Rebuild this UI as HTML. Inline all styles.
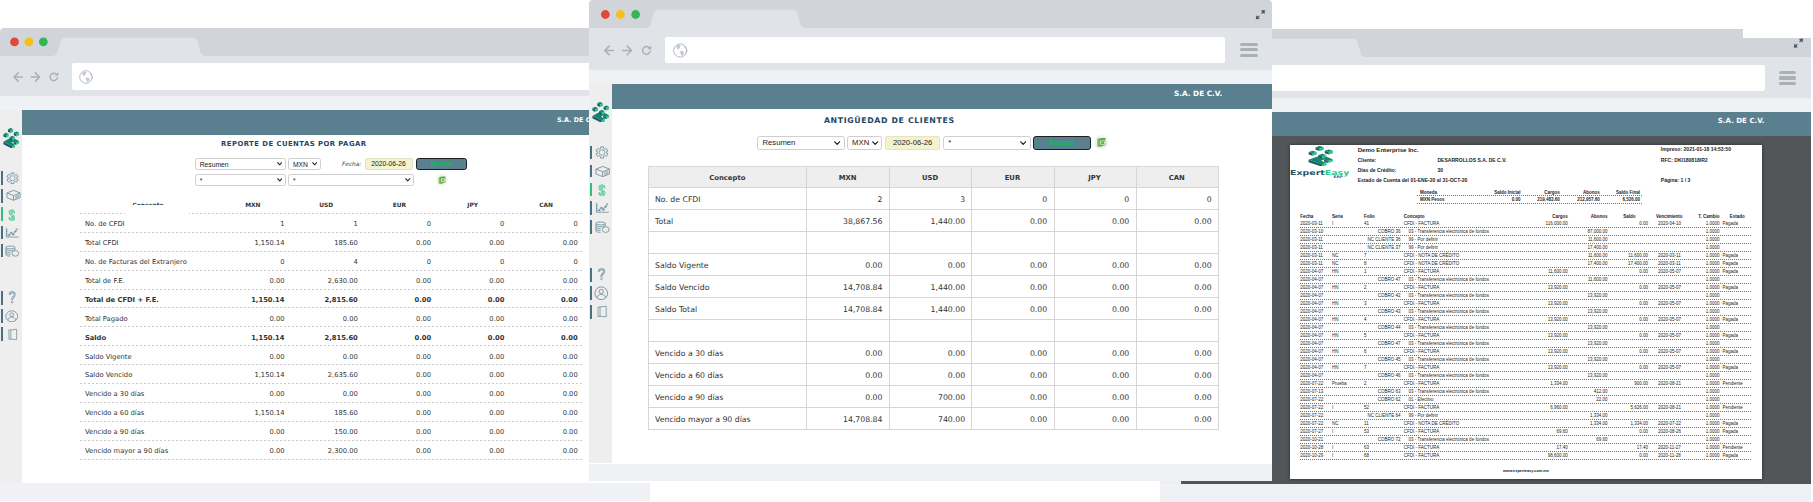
<!DOCTYPE html>
<html lang="es"><head><meta charset="utf-8"><title>ExpertEasy ERP</title>
<style>
html,body{margin:0;padding:0;background:#fff}
body{width:1813px;height:502px;position:relative;overflow:hidden;font-family:"DejaVu Sans","Liberation Sans",sans-serif;color:#333}
.abs{position:absolute;box-sizing:border-box}
.win{position:absolute;left:0;top:0;width:1813px;height:502px;overflow:hidden}
.sel{background:#fff;border:1px solid #cfcfcf;border-radius:2.500px;font-family:"Liberation Sans",sans-serif;color:#222;white-space:nowrap;overflow:hidden}
.t{position:absolute;white-space:nowrap}
.r{text-align:right}
.c{text-align:center}
.b{font-weight:bold}
.pdf{font-family:"Liberation Sans",sans-serif;color:#222}
.pdf .t{font-size:4.500px;line-height:6px}
.dot{position:absolute;height:1px;background:repeating-linear-gradient(90deg,#707070 0,#707070 1px,transparent 1px,transparent 2px)}
.dash{position:absolute;height:1px;background:repeating-linear-gradient(90deg,#cbcbcb 0,#cbcbcb 2px,transparent 2px,transparent 4px)}
</style></head><body>


<svg width="0" height="0" style="position:absolute"><defs>
<symbol id="i-gear" viewBox="0 0 16 16"><g fill="none" stroke="#6b8b99" stroke-width="1" stroke-linejoin="round"><path d="M6.16 1.14 L9.84 1.14 L9.42 2.69 L11.89 4.11 L13.02 2.98 L14.86 6.16 L13.31 6.58 L13.31 9.42 L14.86 9.84 L13.02 13.02 L11.89 11.89 L9.42 13.31 L9.84 14.86 L6.16 14.86 L6.58 13.31 L4.11 11.89 L2.98 13.02 L1.14 9.84 L2.69 9.42 L2.69 6.58 L1.14 6.16 L2.98 2.98 L4.11 4.11 L6.58 2.69Z" stroke-width="0.950"/><circle cx="8" cy="8" r="3.300" stroke-width="0.900"/></g></symbol>
<symbol id="i-box" viewBox="0 0 16 16"><g fill="none" stroke="#6b8b99" stroke-width="0.95" stroke-linejoin="round"><path d="M8 1.800 15 5.200v6.200l-7 3.400-7-3.400V5.200z"/><path d="M1 5.200l7 3.400 7-3.400M8 8.600v6.200"/><path d="M10.200 9.400l3.200-1.500v2.800l-3.200 1.500z" stroke-width="0.6"/><path d="M10.900 10.200l1.800-.8M10.900 11.200l1.800-.8" stroke-width="0.5"/></g></symbol>
<symbol id="i-chart" viewBox="0 0 16 16"><g fill="none" stroke="#6b8b99" stroke-width="0.95" stroke-linecap="round"><path d="M1.600 1.500v12.400h13.400"/><path d="M1.600 4h1.600M1.600 6.500h1.600M1.600 9h1.600M1.600 11.500h1.600" stroke-width="0.6"/><path d="M4.500 11.200l2.300-3.400 2.300 2.600 2.400-4.200 2.300-3"/><circle cx="4.500" cy="11.400" r="1" fill="#eee"/><circle cx="6.900" cy="8" r="1" fill="#eee"/><circle cx="9.200" cy="10.400" r="1" fill="#eee"/><circle cx="11.500" cy="6.400" r="1" fill="#eee"/><path d="M12.400 2.600l1.800-.2-.1 1.800" stroke-width="0.7"/></g></symbol>
<symbol id="i-coins" viewBox="0 0 16 16"><g fill="none" stroke="#6b8b99" stroke-width="0.95"><ellipse cx="6" cy="3.200" rx="5" ry="1.900"/><path d="M1 3.200v2.400c0 1 2.200 1.900 5 1.900s5-.9 5-1.900V3.200"/><path d="M1 5.600v2.400c0 1 2.200 1.900 5 1.900"/><path d="M1 8v2.400c0 1 2.200 1.900 5 1.900"/><path d="M1 10.400v2.400c0 1 2.200 1.900 5 1.900"/><circle cx="11.400" cy="11" r="3.700" fill="#eee"/></g></symbol>
<symbol id="i-user" viewBox="0 0 16 16"><g fill="none" stroke="#6b8b99" stroke-width="0.95"><circle cx="8" cy="8" r="7"/><circle cx="8" cy="6" r="2.300"/><path d="M3.200 13c.6-2.600 2.600-3.900 4.800-3.900s4.200 1.300 4.800 3.900"/></g></symbol>
<symbol id="i-book" viewBox="0 0 16 16"><g fill="none" stroke="#6b8b99" stroke-width="0.95" stroke-linejoin="round"><path d="M2.600 2.400h2.600v11.600H2.600z"/><path d="M5.200 2.400 13.200 1.600v12.800l-8 -.4"/></g></symbol>
<symbol id="i-logo" viewBox="0 0 26 22"><g><path d="M11.90 -0.10 L16.05 1.35 L11.90 2.80 L7.75 1.35z" fill="#14866f"/><path d="M7.75 1.35 L11.90 2.80 L11.90 5.50 L7.75 4.05z" fill="#1f5b68"/><path d="M16.05 1.35 L11.90 2.80 L11.90 5.50 L16.05 4.05z" fill="#27c583"/><path d="M4.80 5.10 L8.95 6.55 L4.80 8.00 L0.65 6.55z" fill="#14866f"/><path d="M0.65 6.55 L4.80 8.00 L4.80 10.70 L0.65 9.25z" fill="#1f5b68"/><path d="M8.95 6.55 L4.80 8.00 L4.80 10.70 L8.95 9.25z" fill="#27c583"/><path d="M21.20 3.70 L25.35 5.15 L21.20 6.60 L17.05 5.15z" fill="#14866f"/><path d="M17.05 5.15 L21.20 6.60 L21.20 9.30 L17.05 7.85z" fill="#1f5b68"/><path d="M25.35 5.15 L21.20 6.60 L21.20 9.30 L25.35 7.85z" fill="#27c583"/><path d="M9.600 11.400 0.600 15 14.400 20 19 18.200 13.200 16 16.400 14.600 20.800 16.300 25.400 14.500 17.200 11.300 13.600 12.700z" fill="#14866f"/><path d="M0.600 15v2.600l13.800 5v-2.600z" fill="#1f5b68"/><path d="M14.400 20v2.600l4.600-1.800v-2.600z" fill="#27c583"/><path d="M16.400 14.600v2.200l4.400 1.700v-2.200z" fill="#1f5b68"/><path d="M20.800 16.300v2.200l4.600-1.800v-2.200z" fill="#27c583"/><path d="M14.55 8.40 L18.70 9.85 L14.55 11.30 L10.40 9.85z" fill="#14866f"/><path d="M10.40 9.85 L14.55 11.30 L14.55 14.00 L10.40 12.55z" fill="#1f5b68"/><path d="M18.70 9.85 L14.55 11.30 L14.55 14.00 L18.70 12.55z" fill="#27c583"/></g></symbol>
<symbol id="i-xls" viewBox="0 0 14 14"><linearGradient id="xg" x1="0" x2="1" y1="0" y2="0"><stop offset="0" stop-color="#8ed06c"/><stop offset="0.350" stop-color="#5fae42"/><stop offset="1" stop-color="#58a83e"/></linearGradient><circle cx="7" cy="7" r="7" fill="#f3f3f3"/><path d="M3 3.700 C5 2.700 9 2.700 11 2.900 V9.800 C9.500 10 8 10.500 7 11.400 L3 11.400z" fill="url(#xg)"/><path d="M5.900 5.200h4.800v4.300H5.900z" fill="#e3f1da"/><path d="M6.700 5.900l3.200 2.900M9.900 5.900l-3.200 2.900" stroke="#4f9e38" stroke-width="1.100"/></symbol>
</defs></svg>

<div class="win" id="right">
<div class="abs" style="left:1160.4px;top:28.9px;width:650.3px;height:27.700000000000003px;background:#d1d5da;border-radius:4px 4px 0 0"></div>
<svg class="abs" style="left:1160.4px;top:28.9px"  width="650.3" height="28.700000000000003" viewBox="0 0 650.3 28.700000000000003"><path d="M53.6 28.700000000000003 L53.6 27.700000000000003 Q56.4 27.700000000000003 57.3 25.000000000000004 L60.8 12.5 Q61.7 9.8 64.5 9.8 L193.6 9.8 Q196.4 9.8 197.3 12.5 L200.8 25.000000000000004 Q201.7 27.700000000000003 204.5 27.700000000000003 L204.5 28.700000000000003 Z" fill="#e0e4e9"/><circle cx="14.5" cy="13.9" r="4.4" fill="#e0483e"/><circle cx="28.85" cy="13.9" r="4.4" fill="#f6c115"/><circle cx="43.35" cy="13.9" r="4.4" fill="#34b556"/><g fill="#4b5563" stroke="#4b5563" stroke-width="1.1"><path d="M641.8 10.899999999999999 L639.6999999999999 13.0 M637.4999999999999 15.2 L635.3999999999999 17.3" fill="none"/><path d="M643.1999999999999 9.5 l-4.1 0.5 l3.6 3.6 z" stroke="none"/><path d="M633.9999999999999 18.7 l4.1 -0.5 l-3.6 -3.6 z" stroke="none"/></g></svg>
<div class="abs" style="left:1160.4px;top:56.6px;width:650.3px;height:41.4px;background:#e0e4e9"></div>
<div class="abs" style="left:1160.4px;top:98px;width:650.3px;height:13.799999999999997px;background:#eff1f5"></div>
<div class="abs" style="left:1232.1000000000001px;top:64.9px;width:533.3px;height:26.099999999999994px;background:#fff;border-radius:2px"></div>
<svg class="abs" style="left:1160.4px;top:68.45px" width="110.0" height="20.0" viewBox="0 0 110 20" fill="none" stroke="#a9b0ba" stroke-width="1.550" stroke-linecap="round" stroke-linejoin="round"><path d="M22.4 10 H14.4 M18.2 5.900 L14.1 10 L18.2 14.100"/><path d="M31.200 10 H39.2 M35.400 5.900 L39.5 10 L35.400 14.100"/><path d="M56.300 7.200 A3.700 3.700 0 1 0 57.400 10.600" stroke-width="1.350"/><path d="M58.300 5.300 V8.800 H54.800 Z" fill="#a9b0ba" stroke="none"/><g stroke-width="0.850"><circle cx="86" cy="10" r="6.300"/><g fill="#c3c9d2" stroke="none"><path d="M82.300 5.900 C83.400 4.800 85.600 4.500 86.600 5.400 C86.400 6.600 85.200 6.800 85.200 7.900 C84.900 9 83.700 9.300 83.200 8.400 C82.700 7.600 81.900 6.900 82.300 5.900Z"/><path d="M86 10.700 C87.300 10.200 89.200 10.900 89.600 12 C89.600 13.300 88.500 14.100 88.100 15.600 C87.200 15.200 86.500 13.700 86.300 12.600 C86.100 12 85.600 11.300 86 10.700Z"/><path d="M89.800 5.800 C90.800 5.900 91.800 7.200 92 8.700 C91.300 8.900 90.400 8.300 89.900 7.500Z"/><path d="M90.800 10.200 C91.500 10.400 92.100 11 92 12.200 C91.300 12.800 90.500 11.600 90.800 10.200Z"/></g></g></svg>
<div class="abs" style="left:1779.1000000000001px;top:70.85000000000001px;width:17.4px;height:3.2px;border-radius:1.6px;background:#a9b0ba"></div>
<div class="abs" style="left:1779.1000000000001px;top:76.35000000000001px;width:17.4px;height:3.2px;border-radius:1.6px;background:#a9b0ba"></div>
<div class="abs" style="left:1779.1000000000001px;top:81.85000000000001px;width:17.4px;height:3.2px;border-radius:1.6px;background:#a9b0ba"></div>
<div class="abs" style="left:1160.4px;top:111.8px;width:20.6px;height:372.4px;background:#eeeeee"></div>
<div class="abs" style="left:1181.0px;top:111.8px;width:629.6999999999999px;height:24.600px;background:#5a7f8f"></div>
<div class="abs" style="left:1181.0px;top:136px;width:629.6999999999999px;height:348.2px;background:#525659"></div>
<div class="abs" style="left:1160.4px;top:484.2px;width:650.3px;height:20px;background:#eff1f5"></div>
<div class="t b" style="left:1717.800px;top:115.400px;font-size:7.050px;line-height:11px;color:#fff">S.A. DE C.V.</div>
<div class="abs" style="left:1742.9px;top:0;width:80px;height:37.9px;background:#fff"></div>
<div class="abs pdf" style="left:1290px;top:144.6px;width:472px;height:334.2px;background:#fff;box-shadow:0 0 3px rgba(0,0,0,.55)">
<svg class="abs" style="left:17.90000000000009px;top:1.4000000000000057px" width="25.500" height="20.200" viewBox="0 0 26 22" preserveAspectRatio="none"><use href="#i-logo"/></svg>
<svg class="abs" style="left:0.2999999999999545px;top:22.900000000000006px;overflow:visible" width="60" height="12" viewBox="0 0 60 12"><text x="0" y="8.200" font-family="DejaVu Sans, sans-serif" font-weight="bold" font-size="6.800" textLength="59.400" lengthAdjust="spacingAndGlyphs"><tspan fill="#28556a">Expert</tspan><tspan fill="#2fc88a">Easy</tspan></text><text x="43.500" y="11" font-family="DejaVu Sans, sans-serif" font-weight="bold" font-size="3.500" fill="#2d6374" textLength="9.500" lengthAdjust="spacingAndGlyphs">ERP</text></svg>
<div class="t b" style="top:2.40px;left:67.70px;font-size:6.100px;">Demo Enterprise Inc.</div>
<div class="t b" style="top:12.70px;left:67.70px;font-size:5.050px;">Cliente:</div>
<div class="t b" style="top:12.70px;left:147.40px;font-size:5.050px;">DESARROLLOS S.A. DE C.V.</div>
<div class="t b" style="top:22.70px;left:67.70px;font-size:5.050px;">Días de Crédito:</div>
<div class="t b" style="top:22.70px;left:147.40px;font-size:5.050px;">30</div>
<div class="t b" style="top:32.60px;left:67.70px;font-size:5.050px;">Estado de Cuenta del 01-ENE-20 al 31-OCT-20</div>
<div class="t b" style="top:1.70px;left:370.80px;font-size:5.050px;">Impreso: 2021-01-18 14:53:50</div>
<div class="t b" style="top:12.70px;left:370.80px;font-size:5.050px;">RFC: DKI180818IR2</div>
<div class="t b" style="top:32.60px;left:370.80px;font-size:5.050px;">Página: 1 / 3</div>
<div class="t b" style="top:45.20px;left:130.00px;">Moneda</div>
<div class="t b" style="top:45.20px;right:241.60px;">Saldo Inicial</div>
<div class="t b" style="top:45.20px;right:202.20px;">Cargos</div>
<div class="t b" style="top:45.20px;right:162.30px;">Abonos</div>
<div class="t b" style="top:45.20px;right:122.00px;">Saldo Final</div>
<div class="dot" style="left:126.5px;top:50.5px;width:226.500px"></div>
<div class="t b" style="top:52.70px;left:130.00px;">MXN Pesos</div>
<div class="t b" style="top:52.70px;right:241.60px;">0.00</div>
<div class="t b" style="top:52.70px;right:202.20px;">219,483.60</div>
<div class="t b" style="top:52.70px;right:162.30px;">212,957.60</div>
<div class="t b" style="top:52.70px;right:122.00px;">6,526.00</div>
<div class="dot" style="left:126.5px;top:58.400000000000006px;width:226.500px"></div>
<div class="t b" style="top:69.00px;left:10.20px;">Fecha</div>
<div class="t b" style="top:69.00px;left:42.10px;">Serie</div>
<div class="t b" style="top:69.00px;left:74.00px;">Folio</div>
<div class="t b" style="top:69.00px;left:113.80px;">Concepto</div>
<div class="t b" style="top:69.00px;right:194.20px;">Cargos</div>
<div class="t b" style="top:69.00px;right:154.40px;">Abonos</div>
<div class="t b" style="top:69.00px;right:126.50px;">Saldo</div>
<div class="t b" style="top:69.00px;left:366.00px;">Vencimiento</div>
<div class="t b" style="top:69.00px;right:42.60px;">T. Cambio</div>
<div class="t b" style="top:69.00px;left:439.80px;">Estado</div>
<div class="t " style="top:76.40px;left:10.20px;">2020-03-11</div>
<div class="t " style="top:76.40px;left:42.10px;">I</div>
<div class="t " style="top:76.40px;left:74.00px;">41</div>
<div class="t " style="top:76.40px;left:113.80px;">CFDI - FACTURA</div>
<div class="t " style="top:76.40px;right:194.20px;">116,000.00</div>
<div class="t " style="top:76.40px;right:114.10px;">0.00</div>
<div class="t " style="top:76.40px;left:368.00px;">2020-04-10</div>
<div class="t " style="top:76.40px;right:42.40px;">1.0000</div>
<div class="t " style="top:76.40px;left:432.60px;">Pagada</div>
<div class="dot" style="left:10px;top:82.80px;width:451.700px"></div>
<div class="t " style="top:84.40px;left:10.20px;">2020-03-10</div>
<div class="t " style="top:84.40px;right:361.40px;">COBRO 36</div>
<div class="t " style="top:84.40px;left:118.60px;">03 - Transferencia electrónica de fondos</div>
<div class="t " style="top:84.40px;right:154.40px;">87,000.00</div>
<div class="t " style="top:84.40px;right:42.40px;">1.0000</div>
<div class="dot" style="left:10px;top:90.80px;width:451.700px"></div>
<div class="t " style="top:92.40px;left:10.20px;">2020-03-11</div>
<div class="t " style="top:92.40px;right:361.40px;">NC CLIENTE 36</div>
<div class="t " style="top:92.40px;left:118.60px;">99 - Por definir</div>
<div class="t " style="top:92.40px;right:154.40px;">11,600.00</div>
<div class="t " style="top:92.40px;right:42.40px;">1.0000</div>
<div class="dot" style="left:10px;top:98.80px;width:451.700px"></div>
<div class="t " style="top:100.40px;left:10.20px;">2020-03-11</div>
<div class="t " style="top:100.40px;right:361.40px;">NC CLIENTE 37</div>
<div class="t " style="top:100.40px;left:118.60px;">99 - Por definir</div>
<div class="t " style="top:100.40px;right:154.40px;">17,400.00</div>
<div class="t " style="top:100.40px;right:42.40px;">1.0000</div>
<div class="dot" style="left:10px;top:106.80px;width:451.700px"></div>
<div class="t " style="top:108.40px;left:10.20px;">2020-03-11</div>
<div class="t " style="top:108.40px;left:42.10px;">NC</div>
<div class="t " style="top:108.40px;left:74.00px;">7</div>
<div class="t " style="top:108.40px;left:113.80px;">CFDI - NOTA DE CRÉDITO</div>
<div class="t " style="top:108.40px;right:154.40px;">11,600.00</div>
<div class="t " style="top:108.40px;right:114.10px;">11,600.00</div>
<div class="t " style="top:108.40px;left:368.00px;">2020-03-11</div>
<div class="t " style="top:108.40px;right:42.40px;">1.0000</div>
<div class="t " style="top:108.40px;left:432.60px;">Pagada</div>
<div class="dot" style="left:10px;top:114.80px;width:451.700px"></div>
<div class="t " style="top:116.40px;left:10.20px;">2020-03-11</div>
<div class="t " style="top:116.40px;left:42.10px;">NC</div>
<div class="t " style="top:116.40px;left:74.00px;">8</div>
<div class="t " style="top:116.40px;left:113.80px;">CFDI - NOTA DE CRÉDITO</div>
<div class="t " style="top:116.40px;right:154.40px;">17,400.00</div>
<div class="t " style="top:116.40px;right:114.10px;">17,400.00</div>
<div class="t " style="top:116.40px;left:368.00px;">2020-03-11</div>
<div class="t " style="top:116.40px;right:42.40px;">1.0000</div>
<div class="t " style="top:116.40px;left:432.60px;">Pagada</div>
<div class="dot" style="left:10px;top:122.80px;width:451.700px"></div>
<div class="t " style="top:124.40px;left:10.20px;">2020-04-07</div>
<div class="t " style="top:124.40px;left:42.10px;">HN</div>
<div class="t " style="top:124.40px;left:74.00px;">1</div>
<div class="t " style="top:124.40px;left:113.80px;">CFDI - FACTURA</div>
<div class="t " style="top:124.40px;right:194.20px;">11,600.00</div>
<div class="t " style="top:124.40px;right:114.10px;">0.00</div>
<div class="t " style="top:124.40px;left:368.00px;">2020-05-07</div>
<div class="t " style="top:124.40px;right:42.40px;">1.0000</div>
<div class="t " style="top:124.40px;left:432.60px;">Pagada</div>
<div class="dot" style="left:10px;top:130.80px;width:451.700px"></div>
<div class="t " style="top:132.40px;left:10.20px;">2020-04-07</div>
<div class="t " style="top:132.40px;right:361.40px;">COBRO 47</div>
<div class="t " style="top:132.40px;left:118.60px;">03 - Transferencia electrónica de fondos</div>
<div class="t " style="top:132.40px;right:154.40px;">11,600.00</div>
<div class="t " style="top:132.40px;right:42.40px;">1.0000</div>
<div class="dot" style="left:10px;top:138.80px;width:451.700px"></div>
<div class="t " style="top:140.40px;left:10.20px;">2020-04-07</div>
<div class="t " style="top:140.40px;left:42.10px;">HN</div>
<div class="t " style="top:140.40px;left:74.00px;">2</div>
<div class="t " style="top:140.40px;left:113.80px;">CFDI - FACTURA</div>
<div class="t " style="top:140.40px;right:194.20px;">13,920.00</div>
<div class="t " style="top:140.40px;right:114.10px;">0.00</div>
<div class="t " style="top:140.40px;left:368.00px;">2020-05-07</div>
<div class="t " style="top:140.40px;right:42.40px;">1.0000</div>
<div class="t " style="top:140.40px;left:432.60px;">Pagada</div>
<div class="dot" style="left:10px;top:146.80px;width:451.700px"></div>
<div class="t " style="top:148.40px;left:10.20px;">2020-04-07</div>
<div class="t " style="top:148.40px;right:361.40px;">COBRO 42</div>
<div class="t " style="top:148.40px;left:118.60px;">03 - Transferencia electrónica de fondos</div>
<div class="t " style="top:148.40px;right:154.40px;">13,920.00</div>
<div class="t " style="top:148.40px;right:42.40px;">1.0000</div>
<div class="dot" style="left:10px;top:154.80px;width:451.700px"></div>
<div class="t " style="top:156.40px;left:10.20px;">2020-04-07</div>
<div class="t " style="top:156.40px;left:42.10px;">HN</div>
<div class="t " style="top:156.40px;left:74.00px;">3</div>
<div class="t " style="top:156.40px;left:113.80px;">CFDI - FACTURA</div>
<div class="t " style="top:156.40px;right:194.20px;">13,920.00</div>
<div class="t " style="top:156.40px;right:114.10px;">0.00</div>
<div class="t " style="top:156.40px;left:368.00px;">2020-05-07</div>
<div class="t " style="top:156.40px;right:42.40px;">1.0000</div>
<div class="t " style="top:156.40px;left:432.60px;">Pagada</div>
<div class="dot" style="left:10px;top:162.80px;width:451.700px"></div>
<div class="t " style="top:164.40px;left:10.20px;">2020-04-07</div>
<div class="t " style="top:164.40px;right:361.40px;">COBRO 43</div>
<div class="t " style="top:164.40px;left:118.60px;">03 - Transferencia electrónica de fondos</div>
<div class="t " style="top:164.40px;right:154.40px;">13,920.00</div>
<div class="t " style="top:164.40px;right:42.40px;">1.0000</div>
<div class="dot" style="left:10px;top:170.80px;width:451.700px"></div>
<div class="t " style="top:172.40px;left:10.20px;">2020-04-07</div>
<div class="t " style="top:172.40px;left:42.10px;">HN</div>
<div class="t " style="top:172.40px;left:74.00px;">4</div>
<div class="t " style="top:172.40px;left:113.80px;">CFDI - FACTURA</div>
<div class="t " style="top:172.40px;right:194.20px;">13,920.00</div>
<div class="t " style="top:172.40px;right:114.10px;">0.00</div>
<div class="t " style="top:172.40px;left:368.00px;">2020-05-07</div>
<div class="t " style="top:172.40px;right:42.40px;">1.0000</div>
<div class="t " style="top:172.40px;left:432.60px;">Pagada</div>
<div class="dot" style="left:10px;top:178.80px;width:451.700px"></div>
<div class="t " style="top:180.40px;left:10.20px;">2020-04-07</div>
<div class="t " style="top:180.40px;right:361.40px;">COBRO 44</div>
<div class="t " style="top:180.40px;left:118.60px;">03 - Transferencia electrónica de fondos</div>
<div class="t " style="top:180.40px;right:154.40px;">13,920.00</div>
<div class="t " style="top:180.40px;right:42.40px;">1.0000</div>
<div class="dot" style="left:10px;top:186.80px;width:451.700px"></div>
<div class="t " style="top:188.40px;left:10.20px;">2020-04-07</div>
<div class="t " style="top:188.40px;left:42.10px;">HN</div>
<div class="t " style="top:188.40px;left:74.00px;">5</div>
<div class="t " style="top:188.40px;left:113.80px;">CFDI - FACTURA</div>
<div class="t " style="top:188.40px;right:194.20px;">13,920.00</div>
<div class="t " style="top:188.40px;right:114.10px;">0.00</div>
<div class="t " style="top:188.40px;left:368.00px;">2020-05-07</div>
<div class="t " style="top:188.40px;right:42.40px;">1.0000</div>
<div class="t " style="top:188.40px;left:432.60px;">Pagada</div>
<div class="dot" style="left:10px;top:194.80px;width:451.700px"></div>
<div class="t " style="top:196.40px;left:10.20px;">2020-04-07</div>
<div class="t " style="top:196.40px;right:361.40px;">COBRO 47</div>
<div class="t " style="top:196.40px;left:118.60px;">03 - Transferencia electrónica de fondos</div>
<div class="t " style="top:196.40px;right:154.40px;">13,920.00</div>
<div class="t " style="top:196.40px;right:42.40px;">1.0000</div>
<div class="dot" style="left:10px;top:202.80px;width:451.700px"></div>
<div class="t " style="top:204.40px;left:10.20px;">2020-04-07</div>
<div class="t " style="top:204.40px;left:42.10px;">HN</div>
<div class="t " style="top:204.40px;left:74.00px;">6</div>
<div class="t " style="top:204.40px;left:113.80px;">CFDI - FACTURA</div>
<div class="t " style="top:204.40px;right:194.20px;">13,920.00</div>
<div class="t " style="top:204.40px;right:114.10px;">0.00</div>
<div class="t " style="top:204.40px;left:368.00px;">2020-05-07</div>
<div class="t " style="top:204.40px;right:42.40px;">1.0000</div>
<div class="t " style="top:204.40px;left:432.60px;">Pagada</div>
<div class="dot" style="left:10px;top:210.80px;width:451.700px"></div>
<div class="t " style="top:212.40px;left:10.20px;">2020-04-07</div>
<div class="t " style="top:212.40px;right:361.40px;">COBRO 45</div>
<div class="t " style="top:212.40px;left:118.60px;">03 - Transferencia electrónica de fondos</div>
<div class="t " style="top:212.40px;right:154.40px;">13,920.00</div>
<div class="t " style="top:212.40px;right:42.40px;">1.0000</div>
<div class="dot" style="left:10px;top:218.80px;width:451.700px"></div>
<div class="t " style="top:220.40px;left:10.20px;">2020-04-07</div>
<div class="t " style="top:220.40px;left:42.10px;">HN</div>
<div class="t " style="top:220.40px;left:74.00px;">7</div>
<div class="t " style="top:220.40px;left:113.80px;">CFDI - FACTURA</div>
<div class="t " style="top:220.40px;right:194.20px;">13,920.00</div>
<div class="t " style="top:220.40px;right:114.10px;">0.00</div>
<div class="t " style="top:220.40px;left:368.00px;">2020-05-07</div>
<div class="t " style="top:220.40px;right:42.40px;">1.0000</div>
<div class="t " style="top:220.40px;left:432.60px;">Pagada</div>
<div class="dot" style="left:10px;top:226.80px;width:451.700px"></div>
<div class="t " style="top:228.40px;left:10.20px;">2020-04-07</div>
<div class="t " style="top:228.40px;right:361.40px;">COBRO 46</div>
<div class="t " style="top:228.40px;left:118.60px;">03 - Transferencia electrónica de fondos</div>
<div class="t " style="top:228.40px;right:154.40px;">13,920.00</div>
<div class="t " style="top:228.40px;right:42.40px;">1.0000</div>
<div class="dot" style="left:10px;top:234.80px;width:451.700px"></div>
<div class="t " style="top:236.40px;left:10.20px;">2020-07-22</div>
<div class="t " style="top:236.40px;left:42.10px;">Prueba</div>
<div class="t " style="top:236.40px;left:74.00px;">2</div>
<div class="t " style="top:236.40px;left:113.80px;">CFDI - FACTURA</div>
<div class="t " style="top:236.40px;right:194.20px;">1,334.00</div>
<div class="t " style="top:236.40px;right:114.10px;">900.00</div>
<div class="t " style="top:236.40px;left:368.00px;">2020-08-21</div>
<div class="t " style="top:236.40px;right:42.40px;">1.0000</div>
<div class="t " style="top:236.40px;left:432.60px;">Pendiente</div>
<div class="dot" style="left:10px;top:242.80px;width:451.700px"></div>
<div class="t " style="top:244.40px;left:10.20px;">2020-07-13</div>
<div class="t " style="top:244.40px;right:361.40px;">COBRO 63</div>
<div class="t " style="top:244.40px;left:118.60px;">03 - Transferencia electrónica de fondos</div>
<div class="t " style="top:244.40px;right:154.40px;">412.00</div>
<div class="t " style="top:244.40px;right:42.40px;">1.0000</div>
<div class="dot" style="left:10px;top:250.80px;width:451.700px"></div>
<div class="t " style="top:252.40px;left:10.20px;">2020-07-22</div>
<div class="t " style="top:252.40px;right:361.40px;">COBRO 62</div>
<div class="t " style="top:252.40px;left:118.60px;">01 - Efectivo</div>
<div class="t " style="top:252.40px;right:154.40px;">22.00</div>
<div class="t " style="top:252.40px;right:42.40px;">1.0000</div>
<div class="dot" style="left:10px;top:258.80px;width:451.700px"></div>
<div class="t " style="top:260.40px;left:10.20px;">2020-07-22</div>
<div class="t " style="top:260.40px;left:42.10px;">I</div>
<div class="t " style="top:260.40px;left:74.00px;">52</div>
<div class="t " style="top:260.40px;left:113.80px;">CFDI - FACTURA</div>
<div class="t " style="top:260.40px;right:194.20px;">6,960.00</div>
<div class="t " style="top:260.40px;right:114.10px;">5,626.00</div>
<div class="t " style="top:260.40px;left:368.00px;">2020-08-21</div>
<div class="t " style="top:260.40px;right:42.40px;">1.0000</div>
<div class="t " style="top:260.40px;left:432.60px;">Pendiente</div>
<div class="dot" style="left:10px;top:266.80px;width:451.700px"></div>
<div class="t " style="top:268.40px;left:10.20px;">2020-07-22</div>
<div class="t " style="top:268.40px;right:361.40px;">NC CLIENTE 64</div>
<div class="t " style="top:268.40px;left:118.60px;">99 - Por definir</div>
<div class="t " style="top:268.40px;right:154.40px;">1,334.00</div>
<div class="t " style="top:268.40px;right:42.40px;">1.0000</div>
<div class="dot" style="left:10px;top:274.80px;width:451.700px"></div>
<div class="t " style="top:276.40px;left:10.20px;">2020-07-22</div>
<div class="t " style="top:276.40px;left:42.10px;">NC</div>
<div class="t " style="top:276.40px;left:74.00px;">11</div>
<div class="t " style="top:276.40px;left:113.80px;">CFDI - NOTA DE CRÉDITO</div>
<div class="t " style="top:276.40px;right:154.40px;">1,334.00</div>
<div class="t " style="top:276.40px;right:114.10px;">1,334.00</div>
<div class="t " style="top:276.40px;left:368.00px;">2020-07-22</div>
<div class="t " style="top:276.40px;right:42.40px;">1.0000</div>
<div class="t " style="top:276.40px;left:432.60px;">Pagada</div>
<div class="dot" style="left:10px;top:282.80px;width:451.700px"></div>
<div class="t " style="top:284.40px;left:10.20px;">2020-07-27</div>
<div class="t " style="top:284.40px;left:42.10px;">I</div>
<div class="t " style="top:284.40px;left:74.00px;">53</div>
<div class="t " style="top:284.40px;left:113.80px;">CFDI - FACTURA</div>
<div class="t " style="top:284.40px;right:194.20px;">69.60</div>
<div class="t " style="top:284.40px;right:114.10px;">0.00</div>
<div class="t " style="top:284.40px;left:368.00px;">2020-08-26</div>
<div class="t " style="top:284.40px;right:42.40px;">1.0000</div>
<div class="t " style="top:284.40px;left:432.60px;">Pagada</div>
<div class="dot" style="left:10px;top:290.80px;width:451.700px"></div>
<div class="t " style="top:292.40px;left:10.20px;">2020-10-21</div>
<div class="t " style="top:292.40px;right:361.40px;">COBRO 72</div>
<div class="t " style="top:292.40px;left:118.60px;">03 - Transferencia electrónica de fondos</div>
<div class="t " style="top:292.40px;right:154.40px;">69.60</div>
<div class="t " style="top:292.40px;right:42.40px;">1.0000</div>
<div class="dot" style="left:10px;top:298.80px;width:451.700px"></div>
<div class="t " style="top:300.40px;left:10.20px;">2020-10-28</div>
<div class="t " style="top:300.40px;left:42.10px;">I</div>
<div class="t " style="top:300.40px;left:74.00px;">63</div>
<div class="t " style="top:300.40px;left:113.80px;">CFDI - FACTURA</div>
<div class="t " style="top:300.40px;right:194.20px;">17.40</div>
<div class="t " style="top:300.40px;right:114.10px;">17.40</div>
<div class="t " style="top:300.40px;left:368.00px;">2020-11-27</div>
<div class="t " style="top:300.40px;right:42.40px;">1.0000</div>
<div class="t " style="top:300.40px;left:432.60px;">Pendiente</div>
<div class="dot" style="left:10px;top:306.80px;width:451.700px"></div>
<div class="t " style="top:308.40px;left:10.20px;">2020-10-29</div>
<div class="t " style="top:308.40px;left:42.10px;">I</div>
<div class="t " style="top:308.40px;left:74.00px;">68</div>
<div class="t " style="top:308.40px;left:113.80px;">CFDI - FACTURA</div>
<div class="t " style="top:308.40px;right:194.20px;">98,600.00</div>
<div class="t " style="top:308.40px;right:114.10px;">0.00</div>
<div class="t " style="top:308.40px;left:368.00px;">2020-11-28</div>
<div class="t " style="top:308.40px;right:42.40px;">1.0000</div>
<div class="t " style="top:308.40px;left:432.60px;">Pagada</div>
<div class="dot" style="left:10px;top:314.80px;width:451.700px"></div>
<div class="t b" style="top:323.70px;left:186.00px;width:100px;text-align:center;font-size:3.900px;">www.experteasy.com.mx</div>
</div>
</div>
<div class="win" id="left">
<div class="abs" style="left:0px;top:28px;width:650px;height:27.5px;background:#d1d5da;border-radius:4px 4px 0 0"></div>
<svg class="abs" style="left:0px;top:28px"  width="650" height="28.5" viewBox="0 0 650 28.5"><path d="M53.6 28.5 L53.6 27.5 Q56.4 27.5 57.3 24.8 L60.8 12.5 Q61.7 9.8 64.5 9.8 L193.6 9.8 Q196.4 9.8 197.3 12.5 L200.8 24.8 Q201.7 27.5 204.5 27.5 L204.5 28.5 Z" fill="#e0e4e9"/><circle cx="14.5" cy="13.9" r="4.4" fill="#e0483e"/><circle cx="28.85" cy="13.9" r="4.4" fill="#f6c115"/><circle cx="43.35" cy="13.9" r="4.4" fill="#34b556"/><g fill="#4b5563" stroke="#4b5563" stroke-width="1.1"><path d="M641.5 10.899999999999999 L639.4 13.0 M637.1999999999999 15.2 L635.0999999999999 17.3" fill="none"/><path d="M642.9 9.5 l-4.1 0.5 l3.6 3.6 z" stroke="none"/><path d="M633.6999999999999 18.7 l4.1 -0.5 l-3.6 -3.6 z" stroke="none"/></g></svg>
<div class="abs" style="left:0px;top:55.5px;width:650px;height:40.8px;background:#e0e4e9"></div>
<div class="abs" style="left:0px;top:96.3px;width:650px;height:13.700000000000003px;background:#eff1f5"></div>
<div class="abs" style="left:71.7px;top:63.4px;width:531.3px;height:26.6px;background:#fff;border-radius:2px"></div>
<svg class="abs" style="left:0px;top:67.2px" width="110.0" height="20.0" viewBox="0 0 110 20" fill="none" stroke="#a9b0ba" stroke-width="1.550" stroke-linecap="round" stroke-linejoin="round"><path d="M22.4 10 H14.4 M18.2 5.900 L14.1 10 L18.2 14.100"/><path d="M31.200 10 H39.2 M35.400 5.900 L39.5 10 L35.400 14.100"/><path d="M56.300 7.200 A3.700 3.700 0 1 0 57.400 10.600" stroke-width="1.350"/><path d="M58.300 5.300 V8.800 H54.800 Z" fill="#a9b0ba" stroke="none"/><g stroke-width="0.850"><circle cx="86" cy="10" r="6.300"/><g fill="#c3c9d2" stroke="none"><path d="M82.300 5.900 C83.400 4.800 85.600 4.500 86.600 5.400 C86.400 6.600 85.200 6.800 85.200 7.900 C84.900 9 83.700 9.300 83.200 8.400 C82.700 7.600 81.900 6.900 82.300 5.900Z"/><path d="M86 10.700 C87.300 10.200 89.200 10.900 89.600 12 C89.600 13.300 88.500 14.100 88.100 15.600 C87.200 15.200 86.500 13.700 86.300 12.600 C86.100 12 85.600 11.300 86 10.700Z"/><path d="M89.800 5.800 C90.800 5.900 91.800 7.200 92 8.700 C91.300 8.900 90.400 8.300 89.900 7.500Z"/><path d="M90.800 10.200 C91.500 10.400 92.100 11 92 12.200 C91.300 12.800 90.500 11.600 90.800 10.200Z"/></g></g></svg>
<div class="abs" style="left:618.4px;top:69.60000000000001px;width:17.4px;height:3.2px;border-radius:1.6px;background:#a9b0ba"></div>
<div class="abs" style="left:618.4px;top:75.10000000000001px;width:17.4px;height:3.2px;border-radius:1.6px;background:#a9b0ba"></div>
<div class="abs" style="left:618.4px;top:80.60000000000001px;width:17.4px;height:3.2px;border-radius:1.6px;background:#a9b0ba"></div>
<div class="abs" style="left:0;top:110px;width:22px;height:373.4px;background:#eeeeee"></div>
<div class="abs" style="left:22px;top:110px;width:628px;height:25px;background:#5a7f8f"></div>
<div class="abs" style="left:0;top:483.4px;width:650px;height:17.300px;background:#eff1f5"></div>
<div class="t b" style="left:557px;top:114.600px;font-size:6.400px;line-height:11px;color:#fff">S.A. DE C.V.</div>
<svg class="abs" style="left:3px;top:127.5px" width="16.600" height="20.200" viewBox="0 0 26 22" preserveAspectRatio="none"><use href="#i-logo"/></svg>
<div class="abs" style="left:1.4px;top:171px;width:1.7px;height:14px;background:#4a7083"></div>
<svg class="abs" style="left:6px;top:172px" width="13" height="12.5" preserveAspectRatio="none" viewBox="0 0 16 16"><use href="#i-gear"/></svg>
<div class="abs" style="left:1.4px;top:189px;width:1.7px;height:14px;background:#4a7083"></div>
<svg class="abs" style="left:5.6px;top:189.4px" width="15" height="12.2" preserveAspectRatio="none" viewBox="0 0 16 16"><use href="#i-box"/></svg>
<div class="abs" style="left:1.4px;top:207.4px;width:1.7px;height:13.599999999999994px;background:#2fc27f"></div>
<svg class="abs" style="left:8.4px;top:208.6px" width="7.6" height="12.4" preserveAspectRatio="none" viewBox="0 0 9 13" fill="none" stroke-linecap="round"><path d="M7.400 3.700 C7.400 2.300 6 1.700 4.500 1.700 C3 1.700 1.600 2.500 1.600 4 C1.600 5.500 3 6 4.500 6.500 C6 7 7.400 7.600 7.400 9.100 C7.400 10.600 6 11.400 4.500 11.400 C3 11.400 1.600 10.700 1.600 9.300 M4.500 0.400 V12.600" stroke="#2fc27f" stroke-width="1.900"/><path d="M7.400 3.700 C7.400 2.300 6 1.700 4.500 1.700 C3 1.700 1.600 2.500 1.600 4 C1.600 5.500 3 6 4.500 6.500 C6 7 7.400 7.600 7.400 9.100 C7.400 10.600 6 11.400 4.500 11.400 C3 11.400 1.600 10.700 1.600 9.300 M4.500 0.400 V12.600" stroke="#eee" stroke-width="0.600"/></svg>
<div class="abs" style="left:1.4px;top:225.6px;width:1.7px;height:13.400000000000006px;background:#4a7083"></div>
<svg class="abs" style="left:5.4px;top:227px" width="14" height="11.6" preserveAspectRatio="none" viewBox="0 0 16 16"><use href="#i-chart"/></svg>
<div class="abs" style="left:1.4px;top:243.6px;width:1.7px;height:13.799999999999983px;background:#4a7083"></div>
<svg class="abs" style="left:5.4px;top:245px" width="14.6" height="12.2" preserveAspectRatio="none" viewBox="0 0 16 16"><use href="#i-coins"/></svg>
<div class="abs" style="left:1.4px;top:290.9px;width:1.7px;height:13.900000000000034px;background:#4a7083"></div>
<svg class="abs" style="left:7.7px;top:291px" width="8.3" height="13" preserveAspectRatio="none" viewBox="0 0 9 13" fill="none" stroke-linecap="butt"><path d="M1.800 3.900 C1.800 2.100 3 1.300 4.500 1.300 C6 1.300 7.200 2.200 7.200 3.700 C7.200 5.900 4.500 5.800 4.500 8.500" stroke="#6b8b99" stroke-width="2"/><path d="M1.800 3.900 C1.800 2.100 3 1.300 4.500 1.300 C6 1.300 7.200 2.200 7.200 3.700 C7.200 5.900 4.500 5.800 4.500 8.500" stroke="#eee" stroke-width="0.700"/><path d="M3.500 8.500 H5.500" stroke="#6b8b99" stroke-width="0.650"/><circle cx="4.500" cy="11" r="1" stroke="#6b8b99" stroke-width="0.650"/></svg>
<div class="abs" style="left:1.4px;top:309px;width:1.7px;height:13.5px;background:#4a7083"></div>
<svg class="abs" style="left:5.3px;top:309.5px" width="13.5" height="12.6" preserveAspectRatio="none" viewBox="0 0 16 16"><use href="#i-user"/></svg>
<div class="abs" style="left:1.4px;top:327px;width:1.7px;height:13.899999999999977px;background:#4a7083"></div>
<svg class="abs" style="left:6.6px;top:327.6px" width="11.6" height="12.8" preserveAspectRatio="none" viewBox="0 0 16 16"><use href="#i-book"/></svg>
<div class="t b" style="left:221px;top:137.500px;font-size:6.900px;line-height:12px;letter-spacing:0.440px;color:#1d4763">REPORTE DE CUENTAS POR PAGAR</div>
<div class="abs sel" style="left:195.2px;top:158.2px;width:90.8px;height:11.6px;font-size:6.75px;line-height:11.799999999999999px;padding-left:3.5px">Resumen<svg class="abs" style="right:2.552px;top:3.132px" width="5.336" height="3.7119999999999997" viewBox="0 0 10 7"><path d="M1.200 1.300 5 5.300 8.800 1.300" fill="none" stroke="#222" stroke-width="2" stroke-linecap="round" stroke-linejoin="round"/></svg></div>
<div class="abs sel" style="left:288.4px;top:158.2px;width:32.3px;height:11.6px;font-size:6.75px;line-height:11.799999999999999px;padding-left:3.5px">MXN<svg class="abs" style="right:2.552px;top:3.132px" width="5.336" height="3.7119999999999997" viewBox="0 0 10 7"><path d="M1.200 1.300 5 5.300 8.800 1.300" fill="none" stroke="#222" stroke-width="2" stroke-linecap="round" stroke-linejoin="round"/></svg></div>
<div class="t" style="left:342px;top:158.500px;font-size:5.800px;line-height:11.200px;font-style:italic;color:#1d4763;font-family:'DejaVu Sans',sans-serif">Fecha:</div>
<div class="abs" style="left:364.6px;top:158.2px;width:48px;height:11.6px;background:#f3f3cd;border:1px solid #e4e4c4;border-radius:2px;font:6.75px/10px 'Liberation Sans',sans-serif;text-align:center;color:#222">2020-06-26</div>
<div class="abs" style="left:416.4px;top:158px;width:50.6px;height:12px;background:#5a7f8f;border:1.600px solid #1b1f22;border-radius:2.800px;font:6.95px/10.200px 'Liberation Sans',sans-serif;text-align:center;color:#19b85a;-webkit-text-stroke:0.250px #19b85a">Buscar</div>
<div class="abs sel" style="left:195.2px;top:173.6px;width:90.8px;height:12px;font-size:6.75px;line-height:12.2px;padding-left:3.5px">*<svg class="abs" style="right:2.64px;top:3.24px" width="5.5200000000000005" height="3.84" viewBox="0 0 10 7"><path d="M1.200 1.300 5 5.300 8.800 1.300" fill="none" stroke="#222" stroke-width="2" stroke-linecap="round" stroke-linejoin="round"/></svg></div>
<div class="abs sel" style="left:288.4px;top:173.6px;width:125.8px;height:12px;font-size:6.75px;line-height:12.2px;padding-left:3.5px">*<svg class="abs" style="right:2.64px;top:3.24px" width="5.5200000000000005" height="3.84" viewBox="0 0 10 7"><path d="M1.200 1.300 5 5.300 8.800 1.300" fill="none" stroke="#222" stroke-width="2" stroke-linecap="round" stroke-linejoin="round"/></svg></div>
<svg class="abs" style="left:436.400px;top:173.700px" width="12" height="12" viewBox="0 0 14 14"><use href="#i-xls"/></svg>
<div class="t b c" style="left:79.8px;width:136.39999999999998px;top:198.500px;font-size:5.9px;line-height:12px">Concepto</div>
<div class="t b c" style="left:216.2px;width:73.30000000000001px;top:198.500px;font-size:5.9px;line-height:12px">MXN</div>
<div class="t b c" style="left:289.5px;width:73.30000000000001px;top:198.500px;font-size:5.9px;line-height:12px">USD</div>
<div class="t b c" style="left:362.8px;width:73.30000000000001px;top:198.500px;font-size:5.9px;line-height:12px">EUR</div>
<div class="t b c" style="left:436.1px;width:73.29999999999995px;top:198.500px;font-size:5.9px;line-height:12px">JPY</div>
<div class="t b c" style="left:509.4px;width:73.30000000000007px;top:198.500px;font-size:5.9px;line-height:12px">CAN</div>
<div class="abs" style="left:125px;top:204.500px;width:64px;height:6px;background:#fff"></div>
<div class="dash" style="left:79.8px;top:212.7px;width:502.900px"></div>
<div class="abs" style="left:125px;top:209.2px;width:64px;height:6px;background:#fff"></div>
<div class="t" style="left:84.900px;top:217.87px;font-size:6.75px;line-height:12px">No. de CFDI</div>
<div class="t r" style="left:216.2px;width:68.3px;top:217.87px;font-size:6.75px;line-height:12px">1</div>
<div class="t r" style="left:289.5px;width:68.3px;top:217.87px;font-size:6.75px;line-height:12px">1</div>
<div class="t r" style="left:362.8px;width:68.3px;top:217.87px;font-size:6.75px;line-height:12px">0</div>
<div class="t r" style="left:436.1px;width:68.3px;top:217.87px;font-size:6.75px;line-height:12px">0</div>
<div class="t r" style="left:509.4px;width:68.3px;top:217.87px;font-size:6.75px;line-height:12px">0</div>
<div class="dash" style="left:79.8px;top:231.65px;width:502.900px"></div>
<div class="t" style="left:84.900px;top:236.82px;font-size:6.75px;line-height:12px">Total CFDI</div>
<div class="t r" style="left:216.2px;width:68.3px;top:236.82px;font-size:6.75px;line-height:12px">1,150.14</div>
<div class="t r" style="left:289.5px;width:68.3px;top:236.82px;font-size:6.75px;line-height:12px">185.60</div>
<div class="t r" style="left:362.8px;width:68.3px;top:236.82px;font-size:6.75px;line-height:12px">0.00</div>
<div class="t r" style="left:436.1px;width:68.3px;top:236.82px;font-size:6.75px;line-height:12px">0.00</div>
<div class="t r" style="left:509.4px;width:68.3px;top:236.82px;font-size:6.75px;line-height:12px">0.00</div>
<div class="dash" style="left:79.8px;top:250.60px;width:502.900px"></div>
<div class="t" style="left:84.900px;top:255.77px;font-size:6.75px;line-height:12px">No. de Facturas del Extranjero</div>
<div class="t r" style="left:216.2px;width:68.3px;top:255.77px;font-size:6.75px;line-height:12px">0</div>
<div class="t r" style="left:289.5px;width:68.3px;top:255.77px;font-size:6.75px;line-height:12px">4</div>
<div class="t r" style="left:362.8px;width:68.3px;top:255.77px;font-size:6.75px;line-height:12px">0</div>
<div class="t r" style="left:436.1px;width:68.3px;top:255.77px;font-size:6.75px;line-height:12px">0</div>
<div class="t r" style="left:509.4px;width:68.3px;top:255.77px;font-size:6.75px;line-height:12px">0</div>
<div class="dash" style="left:79.8px;top:269.55px;width:502.900px"></div>
<div class="t" style="left:84.900px;top:274.72px;font-size:6.75px;line-height:12px">Total de F.E.</div>
<div class="t r" style="left:216.2px;width:68.3px;top:274.72px;font-size:6.75px;line-height:12px">0.00</div>
<div class="t r" style="left:289.5px;width:68.3px;top:274.72px;font-size:6.75px;line-height:12px">2,630.00</div>
<div class="t r" style="left:362.8px;width:68.3px;top:274.72px;font-size:6.75px;line-height:12px">0.00</div>
<div class="t r" style="left:436.1px;width:68.3px;top:274.72px;font-size:6.75px;line-height:12px">0.00</div>
<div class="t r" style="left:509.4px;width:68.3px;top:274.72px;font-size:6.75px;line-height:12px">0.00</div>
<div class="dash" style="left:79.8px;top:288.50px;width:502.900px"></div>
<div class="t b" style="left:84.900px;top:293.68px;font-size:6.75px;line-height:12px">Total de CFDI + F.E.</div>
<div class="t r b" style="left:216.2px;width:68.3px;top:293.68px;font-size:6.75px;line-height:12px">1,150.14</div>
<div class="t r b" style="left:289.5px;width:68.3px;top:293.68px;font-size:6.75px;line-height:12px">2,815.60</div>
<div class="t r b" style="left:362.8px;width:68.3px;top:293.68px;font-size:6.75px;line-height:12px">0.00</div>
<div class="t r b" style="left:436.1px;width:68.3px;top:293.68px;font-size:6.75px;line-height:12px">0.00</div>
<div class="t r b" style="left:509.4px;width:68.3px;top:293.68px;font-size:6.75px;line-height:12px">0.00</div>
<div class="dash" style="left:79.8px;top:307.45px;width:502.900px"></div>
<div class="t" style="left:84.900px;top:312.62px;font-size:6.75px;line-height:12px">Total Pagado</div>
<div class="t r" style="left:216.2px;width:68.3px;top:312.62px;font-size:6.75px;line-height:12px">0.00</div>
<div class="t r" style="left:289.5px;width:68.3px;top:312.62px;font-size:6.75px;line-height:12px">0.00</div>
<div class="t r" style="left:362.8px;width:68.3px;top:312.62px;font-size:6.75px;line-height:12px">0.00</div>
<div class="t r" style="left:436.1px;width:68.3px;top:312.62px;font-size:6.75px;line-height:12px">0.00</div>
<div class="t r" style="left:509.4px;width:68.3px;top:312.62px;font-size:6.75px;line-height:12px">0.00</div>
<div class="dash" style="left:79.8px;top:326.40px;width:502.900px"></div>
<div class="t b" style="left:84.900px;top:331.57px;font-size:6.75px;line-height:12px">Saldo</div>
<div class="t r b" style="left:216.2px;width:68.3px;top:331.57px;font-size:6.75px;line-height:12px">1,150.14</div>
<div class="t r b" style="left:289.5px;width:68.3px;top:331.57px;font-size:6.75px;line-height:12px">2,815.60</div>
<div class="t r b" style="left:362.8px;width:68.3px;top:331.57px;font-size:6.75px;line-height:12px">0.00</div>
<div class="t r b" style="left:436.1px;width:68.3px;top:331.57px;font-size:6.75px;line-height:12px">0.00</div>
<div class="t r b" style="left:509.4px;width:68.3px;top:331.57px;font-size:6.75px;line-height:12px">0.00</div>
<div class="dash" style="left:79.8px;top:345.35px;width:502.900px"></div>
<div class="t" style="left:84.900px;top:350.53px;font-size:6.75px;line-height:12px">Saldo Vigente</div>
<div class="t r" style="left:216.2px;width:68.3px;top:350.53px;font-size:6.75px;line-height:12px">0.00</div>
<div class="t r" style="left:289.5px;width:68.3px;top:350.53px;font-size:6.75px;line-height:12px">0.00</div>
<div class="t r" style="left:362.8px;width:68.3px;top:350.53px;font-size:6.75px;line-height:12px">0.00</div>
<div class="t r" style="left:436.1px;width:68.3px;top:350.53px;font-size:6.75px;line-height:12px">0.00</div>
<div class="t r" style="left:509.4px;width:68.3px;top:350.53px;font-size:6.75px;line-height:12px">0.00</div>
<div class="dash" style="left:79.8px;top:364.30px;width:502.900px"></div>
<div class="t" style="left:84.900px;top:369.47px;font-size:6.75px;line-height:12px">Saldo Vencido</div>
<div class="t r" style="left:216.2px;width:68.3px;top:369.47px;font-size:6.75px;line-height:12px">1,150.14</div>
<div class="t r" style="left:289.5px;width:68.3px;top:369.47px;font-size:6.75px;line-height:12px">2,635.60</div>
<div class="t r" style="left:362.8px;width:68.3px;top:369.47px;font-size:6.75px;line-height:12px">0.00</div>
<div class="t r" style="left:436.1px;width:68.3px;top:369.47px;font-size:6.75px;line-height:12px">0.00</div>
<div class="t r" style="left:509.4px;width:68.3px;top:369.47px;font-size:6.75px;line-height:12px">0.00</div>
<div class="dash" style="left:79.8px;top:383.25px;width:502.900px"></div>
<div class="t" style="left:84.900px;top:388.43px;font-size:6.75px;line-height:12px">Vencido a 30 días</div>
<div class="t r" style="left:216.2px;width:68.3px;top:388.43px;font-size:6.75px;line-height:12px">0.00</div>
<div class="t r" style="left:289.5px;width:68.3px;top:388.43px;font-size:6.75px;line-height:12px">0.00</div>
<div class="t r" style="left:362.8px;width:68.3px;top:388.43px;font-size:6.75px;line-height:12px">0.00</div>
<div class="t r" style="left:436.1px;width:68.3px;top:388.43px;font-size:6.75px;line-height:12px">0.00</div>
<div class="t r" style="left:509.4px;width:68.3px;top:388.43px;font-size:6.75px;line-height:12px">0.00</div>
<div class="dash" style="left:79.8px;top:402.20px;width:502.900px"></div>
<div class="t" style="left:84.900px;top:407.38px;font-size:6.75px;line-height:12px">Vencido a 60 días</div>
<div class="t r" style="left:216.2px;width:68.3px;top:407.38px;font-size:6.75px;line-height:12px">1,150.14</div>
<div class="t r" style="left:289.5px;width:68.3px;top:407.38px;font-size:6.75px;line-height:12px">185.60</div>
<div class="t r" style="left:362.8px;width:68.3px;top:407.38px;font-size:6.75px;line-height:12px">0.00</div>
<div class="t r" style="left:436.1px;width:68.3px;top:407.38px;font-size:6.75px;line-height:12px">0.00</div>
<div class="t r" style="left:509.4px;width:68.3px;top:407.38px;font-size:6.75px;line-height:12px">0.00</div>
<div class="dash" style="left:79.8px;top:421.15px;width:502.900px"></div>
<div class="t" style="left:84.900px;top:426.32px;font-size:6.75px;line-height:12px">Vencido a 90 días</div>
<div class="t r" style="left:216.2px;width:68.3px;top:426.32px;font-size:6.75px;line-height:12px">0.00</div>
<div class="t r" style="left:289.5px;width:68.3px;top:426.32px;font-size:6.75px;line-height:12px">150.00</div>
<div class="t r" style="left:362.8px;width:68.3px;top:426.32px;font-size:6.75px;line-height:12px">0.00</div>
<div class="t r" style="left:436.1px;width:68.3px;top:426.32px;font-size:6.75px;line-height:12px">0.00</div>
<div class="t r" style="left:509.4px;width:68.3px;top:426.32px;font-size:6.75px;line-height:12px">0.00</div>
<div class="dash" style="left:79.8px;top:440.10px;width:502.900px"></div>
<div class="t" style="left:84.900px;top:445.27px;font-size:6.75px;line-height:12px">Vencido mayor a 90 días</div>
<div class="t r" style="left:216.2px;width:68.3px;top:445.27px;font-size:6.75px;line-height:12px">0.00</div>
<div class="t r" style="left:289.5px;width:68.3px;top:445.27px;font-size:6.75px;line-height:12px">2,300.00</div>
<div class="t r" style="left:362.8px;width:68.3px;top:445.27px;font-size:6.75px;line-height:12px">0.00</div>
<div class="t r" style="left:436.1px;width:68.3px;top:445.27px;font-size:6.75px;line-height:12px">0.00</div>
<div class="t r" style="left:509.4px;width:68.3px;top:445.27px;font-size:6.75px;line-height:12px">0.00</div>
<div class="dash" style="left:79.8px;top:459.05px;width:502.900px"></div>
</div>
<div class="win" id="center">
<div class="abs" style="left:589px;top:0;width:682.8px;height:481.200px;background:#fff;border-radius:4px 4px 0 0"></div>
<div class="abs" style="left:589px;top:0px;width:682.8000000000001px;height:27.7px;background:#d1d5da;border-radius:4px 4px 0 0"></div>
<svg class="abs" style="left:589.6px;top:0px"  width="682.2" height="28.7" viewBox="0 0 682.2 28.7"><path d="M56.25 28.7 L56.25 27.7 Q59.19 27.7 60.14 25.0 L63.81 12.5 Q64.75 9.8 67.69 9.8 L203.18 9.8 Q206.12 9.8 207.07 12.5 L210.74 25.0 Q211.68 27.7 214.62 27.7 L214.62 28.7 Z" fill="#e0e4e9"/><circle cx="15.22" cy="14.5" r="4.4" fill="#e0483e"/><circle cx="30.28" cy="14.5" r="4.4" fill="#f6c115"/><circle cx="45.5" cy="14.5" r="4.4" fill="#34b556"/><g fill="#4b5563" stroke="#4b5563" stroke-width="1.1"><path d="M673.7 11.5 L671.6 13.6 M669.4 15.799999999999999 L667.3 17.9" fill="none"/><path d="M675.1 10.1 l-4.1 0.5 l3.6 3.6 z" stroke="none"/><path d="M665.9 19.299999999999997 l4.1 -0.5 l-3.6 -3.6 z" stroke="none"/></g></svg>
<div class="abs" style="left:589px;top:27.7px;width:682.8000000000001px;height:42.3px;background:#e0e4e9"></div>
<div class="abs" style="left:589px;top:70px;width:682.8000000000001px;height:13.700000000000003px;background:#eff1f5"></div>
<div class="abs" style="left:664.7px;top:36.6px;width:560.3px;height:26.4px;background:#fff;border-radius:2px"></div>
<svg class="abs" style="left:589.6px;top:39.80499999999999px" width="115.44500000000001" height="20.990000000000002" viewBox="0 0 110 20" fill="none" stroke="#a9b0ba" stroke-width="1.550" stroke-linecap="round" stroke-linejoin="round"><path d="M22.4 10 H14.4 M18.2 5.900 L14.1 10 L18.2 14.100"/><path d="M31.200 10 H39.2 M35.400 5.900 L39.5 10 L35.400 14.100"/><path d="M56.300 7.200 A3.700 3.700 0 1 0 57.400 10.600" stroke-width="1.350"/><path d="M58.300 5.300 V8.800 H54.800 Z" fill="#a9b0ba" stroke="none"/><g stroke-width="0.850"><circle cx="86" cy="10" r="6.300"/><g fill="#c3c9d2" stroke="none"><path d="M82.300 5.900 C83.400 4.800 85.600 4.500 86.600 5.400 C86.400 6.600 85.200 6.800 85.200 7.900 C84.900 9 83.700 9.300 83.200 8.400 C82.700 7.600 81.900 6.900 82.300 5.900Z"/><path d="M86 10.700 C87.300 10.200 89.200 10.900 89.600 12 C89.600 13.300 88.500 14.100 88.100 15.600 C87.200 15.200 86.500 13.700 86.300 12.600 C86.100 12 85.600 11.300 86 10.700Z"/><path d="M89.800 5.800 C90.800 5.900 91.800 7.200 92 8.700 C91.300 8.900 90.400 8.300 89.900 7.500Z"/><path d="M90.800 10.200 C91.500 10.400 92.100 11 92 12.200 C91.300 12.800 90.500 11.600 90.800 10.200Z"/></g></g></svg>
<div class="abs" style="left:1240.2000000000003px;top:42.699999999999996px;width:17.4px;height:3.2px;border-radius:1.6px;background:#a9b0ba"></div>
<div class="abs" style="left:1240.2000000000003px;top:48.199999999999996px;width:17.4px;height:3.2px;border-radius:1.6px;background:#a9b0ba"></div>
<div class="abs" style="left:1240.2000000000003px;top:53.699999999999996px;width:17.4px;height:3.2px;border-radius:1.6px;background:#a9b0ba"></div>
<div class="abs" style="left:589px;top:83.7px;width:23.2px;height:379.7px;background:#eeeeee"></div>
<div class="abs" style="left:612.2px;top:83.7px;width:659.5999999999999px;height:25.5px;background:#5a7f8f"></div>
<div class="abs" style="left:589px;top:463.6px;width:682.8px;height:17.800px;background:#eff1f5"></div>
<div class="t b" style="left:1174px;top:88px;font-size:7.300px;line-height:11px;color:#fff">S.A. DE C.V.</div>
<svg class="abs" style="left:591.8px;top:101.6px" width="17.600" height="20.400" viewBox="0 0 26 22" preserveAspectRatio="none"><use href="#i-logo"/></svg>
<div class="abs" style="left:590.0px;top:145.9px;width:1.7px;height:13.5px;background:#4a7083"></div>
<svg class="abs" style="left:595px;top:146px" width="14" height="13" preserveAspectRatio="none" viewBox="0 0 16 16"><use href="#i-gear"/></svg>
<div class="abs" style="left:590.0px;top:164.5px;width:1.7px;height:12.800000000000011px;background:#4a7083"></div>
<svg class="abs" style="left:594.6px;top:164.6px" width="15.4" height="12.6" preserveAspectRatio="none" viewBox="0 0 16 16"><use href="#i-box"/></svg>
<div class="abs" style="left:590.0px;top:182.7px;width:1.7px;height:13.5px;background:#2fc27f"></div>
<svg class="abs" style="left:597.6px;top:183.6px" width="8" height="12.6" preserveAspectRatio="none" viewBox="0 0 9 13" fill="none" stroke-linecap="round"><path d="M7.400 3.700 C7.400 2.300 6 1.700 4.500 1.700 C3 1.700 1.600 2.500 1.600 4 C1.600 5.500 3 6 4.500 6.500 C6 7 7.400 7.600 7.400 9.100 C7.400 10.600 6 11.400 4.500 11.400 C3 11.400 1.600 10.700 1.600 9.300 M4.500 0.400 V12.600" stroke="#2fc27f" stroke-width="1.900"/><path d="M7.400 3.700 C7.400 2.300 6 1.700 4.500 1.700 C3 1.700 1.600 2.500 1.600 4 C1.600 5.500 3 6 4.500 6.500 C6 7 7.400 7.600 7.400 9.100 C7.400 10.600 6 11.400 4.500 11.400 C3 11.400 1.600 10.700 1.600 9.300 M4.500 0.400 V12.600" stroke="#eee" stroke-width="0.600"/></svg>
<div class="abs" style="left:590.0px;top:201.3px;width:1.7px;height:13.5px;background:#4a7083"></div>
<svg class="abs" style="left:594.6px;top:202.4px" width="14.4" height="11.8" preserveAspectRatio="none" viewBox="0 0 16 16"><use href="#i-chart"/></svg>
<div class="abs" style="left:590.0px;top:220px;width:1.7px;height:13.599999999999994px;background:#4a7083"></div>
<svg class="abs" style="left:594.6px;top:221px" width="15" height="12.4" preserveAspectRatio="none" viewBox="0 0 16 16"><use href="#i-coins"/></svg>
<div class="abs" style="left:590.0px;top:267.7px;width:1.7px;height:14.199999999999989px;background:#4a7083"></div>
<svg class="abs" style="left:597px;top:268.4px" width="8.9" height="12.7" preserveAspectRatio="none" viewBox="0 0 9 13" fill="none" stroke-linecap="butt"><path d="M1.800 3.900 C1.800 2.100 3 1.300 4.500 1.300 C6 1.300 7.200 2.200 7.200 3.700 C7.200 5.900 4.500 5.800 4.500 8.500" stroke="#6b8b99" stroke-width="2"/><path d="M1.800 3.900 C1.800 2.100 3 1.300 4.500 1.300 C6 1.300 7.200 2.200 7.200 3.700 C7.200 5.900 4.500 5.800 4.500 8.500" stroke="#eee" stroke-width="0.700"/><path d="M3.500 8.500 H5.500" stroke="#6b8b99" stroke-width="0.650"/><circle cx="4.500" cy="11" r="1" stroke="#6b8b99" stroke-width="0.650"/></svg>
<div class="abs" style="left:590.0px;top:286px;width:1.7px;height:14.199999999999989px;background:#4a7083"></div>
<svg class="abs" style="left:594.4px;top:285.8px" width="14.5" height="14.5" preserveAspectRatio="none" viewBox="0 0 16 16"><use href="#i-user"/></svg>
<div class="abs" style="left:590.0px;top:304.6px;width:1.7px;height:14.299999999999955px;background:#4a7083"></div>
<svg class="abs" style="left:595.8px;top:305.2px" width="12.4" height="13" preserveAspectRatio="none" viewBox="0 0 16 16"><use href="#i-book"/></svg>
<div class="t b" style="left:823.900px;top:114.500px;font-size:7.800px;line-height:12px;letter-spacing:0.640px;color:#1d4763">ANTIGÜEDAD DE CLIENTES</div>
<div class="abs sel" style="left:757.2px;top:136.1px;width:87.6px;height:13.8px;font-size:7.7px;line-height:12.8px;padding-left:4.3px">Resumen<svg class="abs" style="right:3.036px;top:3.7260000000000004px" width="6.348000000000001" height="4.416" viewBox="0 0 10 7"><path d="M1.200 1.300 5 5.300 8.800 1.300" fill="none" stroke="#222" stroke-width="2" stroke-linecap="round" stroke-linejoin="round"/></svg></div>
<div class="abs sel" style="left:847.1px;top:136.1px;width:34.9px;height:13.8px;font-size:7.7px;line-height:12.8px;padding-left:4px">MXN<svg class="abs" style="right:3.036px;top:3.7260000000000004px" width="6.348000000000001" height="4.416" viewBox="0 0 10 7"><path d="M1.200 1.300 5 5.300 8.800 1.300" fill="none" stroke="#222" stroke-width="2" stroke-linecap="round" stroke-linejoin="round"/></svg></div>
<div class="abs" style="left:884.8px;top:136.1px;width:55.7px;height:13.8px;background:#f3f3cd;border:1px solid #e4e4c4;border-radius:2px;font:7.7px/12px 'Liberation Sans',sans-serif;text-align:center;color:#222">2020-06-26</div>
<div class="abs sel" style="left:943px;top:136.1px;width:87.8px;height:13.8px;font-size:7.7px;line-height:12.8px;padding-left:4.3px">*<svg class="abs" style="right:3.036px;top:3.7260000000000004px" width="6.348000000000001" height="4.416" viewBox="0 0 10 7"><path d="M1.200 1.300 5 5.300 8.800 1.300" fill="none" stroke="#222" stroke-width="2" stroke-linecap="round" stroke-linejoin="round"/></svg></div>
<div class="abs" style="left:1033px;top:135.9px;width:57.8px;height:14px;background:#5a7f8f;border:1.800px solid #1b1f22;border-radius:3px;font:7.9px/11.800px 'Liberation Sans',sans-serif;text-align:center;color:#19b85a;-webkit-text-stroke:0.300px #19b85a">Buscar</div>
<svg class="abs" style="left:1094.300px;top:134.600px" width="14.500" height="14.500" viewBox="0 0 14 14"><use href="#i-xls"/></svg>
<div class="abs" style="left:648.3px;top:166px;width:570.6000000000001px;height:21.30000000000001px;background:#eeeeee"></div>
<div class="abs" style="left:648.3px;top:166.00px;width:570.6000000000001px;height:1px;background:#d6d6d6"></div>
<div class="abs" style="left:648.3px;top:187.30px;width:570.6000000000001px;height:1px;background:#d6d6d6"></div>
<div class="abs" style="left:648.3px;top:209.31px;width:570.6000000000001px;height:1px;background:#d6d6d6"></div>
<div class="abs" style="left:648.3px;top:231.32px;width:570.6000000000001px;height:1px;background:#d6d6d6"></div>
<div class="abs" style="left:648.3px;top:253.33px;width:570.6000000000001px;height:1px;background:#d6d6d6"></div>
<div class="abs" style="left:648.3px;top:275.34px;width:570.6000000000001px;height:1px;background:#d6d6d6"></div>
<div class="abs" style="left:648.3px;top:297.35px;width:570.6000000000001px;height:1px;background:#d6d6d6"></div>
<div class="abs" style="left:648.3px;top:319.36px;width:570.6000000000001px;height:1px;background:#d6d6d6"></div>
<div class="abs" style="left:648.3px;top:341.37px;width:570.6000000000001px;height:1px;background:#d6d6d6"></div>
<div class="abs" style="left:648.3px;top:363.38px;width:570.6000000000001px;height:1px;background:#d6d6d6"></div>
<div class="abs" style="left:648.3px;top:385.39px;width:570.6000000000001px;height:1px;background:#d6d6d6"></div>
<div class="abs" style="left:648.3px;top:407.40px;width:570.6000000000001px;height:1px;background:#d6d6d6"></div>
<div class="abs" style="left:648.3px;top:429.41px;width:570.6000000000001px;height:1px;background:#d6d6d6"></div>
<div class="abs" style="left:648.3px;top:166px;width:1px;height:264.41px;background:#d6d6d6"></div>
<div class="abs" style="left:806.3px;top:166px;width:1px;height:264.41px;background:#d6d6d6"></div>
<div class="abs" style="left:888.8px;top:166px;width:1px;height:264.41px;background:#d6d6d6"></div>
<div class="abs" style="left:971.4px;top:166px;width:1px;height:264.41px;background:#d6d6d6"></div>
<div class="abs" style="left:1053.5px;top:166px;width:1px;height:264.41px;background:#d6d6d6"></div>
<div class="abs" style="left:1135.6px;top:166px;width:1px;height:264.41px;background:#d6d6d6"></div>
<div class="abs" style="left:1217.9px;top:166px;width:1px;height:264.41px;background:#d6d6d6"></div>
<div class="t b c" style="left:648.3px;width:158.0px;top:171.75px;font-size:6.850px;line-height:12px">Concepto</div>
<div class="t b c" style="left:806.3px;width:82.5px;top:171.75px;font-size:6.850px;line-height:12px">MXN</div>
<div class="t b c" style="left:888.8px;width:82.60000000000002px;top:171.75px;font-size:6.850px;line-height:12px">USD</div>
<div class="t b c" style="left:971.4px;width:82.10000000000002px;top:171.75px;font-size:6.850px;line-height:12px">EUR</div>
<div class="t b c" style="left:1053.5px;width:82.09999999999991px;top:171.75px;font-size:6.850px;line-height:12px">JPY</div>
<div class="t b c" style="left:1135.6px;width:82.30000000000018px;top:171.75px;font-size:6.850px;line-height:12px">CAN</div>
<div class="t" style="left:655px;top:194.31px;font-size:7.75px;line-height:12px">No. de CFDI</div>
<div class="t r" style="left:806.3px;width:76.2px;top:194.31px;font-size:7.75px;line-height:12px">2</div>
<div class="t r" style="left:888.8px;width:76.3px;top:194.31px;font-size:7.75px;line-height:12px">3</div>
<div class="t r" style="left:971.4px;width:75.8px;top:194.31px;font-size:7.75px;line-height:12px">0</div>
<div class="t r" style="left:1053.5px;width:75.8px;top:194.31px;font-size:7.75px;line-height:12px">0</div>
<div class="t r" style="left:1135.6px;width:76.0px;top:194.31px;font-size:7.75px;line-height:12px">0</div>
<div class="t" style="left:655px;top:216.31px;font-size:7.75px;line-height:12px">Total</div>
<div class="t r" style="left:806.3px;width:76.2px;top:216.31px;font-size:7.75px;line-height:12px">38,867.56</div>
<div class="t r" style="left:888.8px;width:76.3px;top:216.31px;font-size:7.75px;line-height:12px">1,440.00</div>
<div class="t r" style="left:971.4px;width:75.8px;top:216.31px;font-size:7.75px;line-height:12px">0.00</div>
<div class="t r" style="left:1053.5px;width:75.8px;top:216.31px;font-size:7.75px;line-height:12px">0.00</div>
<div class="t r" style="left:1135.6px;width:76.0px;top:216.31px;font-size:7.75px;line-height:12px">0.00</div>
<div class="t" style="left:655px;top:260.34px;font-size:7.75px;line-height:12px">Saldo Vigente</div>
<div class="t r" style="left:806.3px;width:76.2px;top:260.34px;font-size:7.75px;line-height:12px">0.00</div>
<div class="t r" style="left:888.8px;width:76.3px;top:260.34px;font-size:7.75px;line-height:12px">0.00</div>
<div class="t r" style="left:971.4px;width:75.8px;top:260.34px;font-size:7.75px;line-height:12px">0.00</div>
<div class="t r" style="left:1053.5px;width:75.8px;top:260.34px;font-size:7.75px;line-height:12px">0.00</div>
<div class="t r" style="left:1135.6px;width:76.0px;top:260.34px;font-size:7.75px;line-height:12px">0.00</div>
<div class="t" style="left:655px;top:282.35px;font-size:7.75px;line-height:12px">Saldo Vencido</div>
<div class="t r" style="left:806.3px;width:76.2px;top:282.35px;font-size:7.75px;line-height:12px">14,708.84</div>
<div class="t r" style="left:888.8px;width:76.3px;top:282.35px;font-size:7.75px;line-height:12px">1,440.00</div>
<div class="t r" style="left:971.4px;width:75.8px;top:282.35px;font-size:7.75px;line-height:12px">0.00</div>
<div class="t r" style="left:1053.5px;width:75.8px;top:282.35px;font-size:7.75px;line-height:12px">0.00</div>
<div class="t r" style="left:1135.6px;width:76.0px;top:282.35px;font-size:7.75px;line-height:12px">0.00</div>
<div class="t" style="left:655px;top:304.36px;font-size:7.75px;line-height:12px">Saldo Total</div>
<div class="t r" style="left:806.3px;width:76.2px;top:304.36px;font-size:7.75px;line-height:12px">14,708.84</div>
<div class="t r" style="left:888.8px;width:76.3px;top:304.36px;font-size:7.75px;line-height:12px">1,440.00</div>
<div class="t r" style="left:971.4px;width:75.8px;top:304.36px;font-size:7.75px;line-height:12px">0.00</div>
<div class="t r" style="left:1053.5px;width:75.8px;top:304.36px;font-size:7.75px;line-height:12px">0.00</div>
<div class="t r" style="left:1135.6px;width:76.0px;top:304.36px;font-size:7.75px;line-height:12px">0.00</div>
<div class="t" style="left:655px;top:348.38px;font-size:7.75px;line-height:12px">Vencido a 30 días</div>
<div class="t r" style="left:806.3px;width:76.2px;top:348.38px;font-size:7.75px;line-height:12px">0.00</div>
<div class="t r" style="left:888.8px;width:76.3px;top:348.38px;font-size:7.75px;line-height:12px">0.00</div>
<div class="t r" style="left:971.4px;width:75.8px;top:348.38px;font-size:7.75px;line-height:12px">0.00</div>
<div class="t r" style="left:1053.5px;width:75.8px;top:348.38px;font-size:7.75px;line-height:12px">0.00</div>
<div class="t r" style="left:1135.6px;width:76.0px;top:348.38px;font-size:7.75px;line-height:12px">0.00</div>
<div class="t" style="left:655px;top:370.38px;font-size:7.75px;line-height:12px">Vencido a 60 días</div>
<div class="t r" style="left:806.3px;width:76.2px;top:370.38px;font-size:7.75px;line-height:12px">0.00</div>
<div class="t r" style="left:888.8px;width:76.3px;top:370.38px;font-size:7.75px;line-height:12px">0.00</div>
<div class="t r" style="left:971.4px;width:75.8px;top:370.38px;font-size:7.75px;line-height:12px">0.00</div>
<div class="t r" style="left:1053.5px;width:75.8px;top:370.38px;font-size:7.75px;line-height:12px">0.00</div>
<div class="t r" style="left:1135.6px;width:76.0px;top:370.38px;font-size:7.75px;line-height:12px">0.00</div>
<div class="t" style="left:655px;top:392.39px;font-size:7.75px;line-height:12px">Vencido a 90 días</div>
<div class="t r" style="left:806.3px;width:76.2px;top:392.39px;font-size:7.75px;line-height:12px">0.00</div>
<div class="t r" style="left:888.8px;width:76.3px;top:392.39px;font-size:7.75px;line-height:12px">700.00</div>
<div class="t r" style="left:971.4px;width:75.8px;top:392.39px;font-size:7.75px;line-height:12px">0.00</div>
<div class="t r" style="left:1053.5px;width:75.8px;top:392.39px;font-size:7.75px;line-height:12px">0.00</div>
<div class="t r" style="left:1135.6px;width:76.0px;top:392.39px;font-size:7.75px;line-height:12px">0.00</div>
<div class="t" style="left:655px;top:414.41px;font-size:7.75px;line-height:12px">Vencido mayor a 90 días</div>
<div class="t r" style="left:806.3px;width:76.2px;top:414.41px;font-size:7.75px;line-height:12px">14,708.84</div>
<div class="t r" style="left:888.8px;width:76.3px;top:414.41px;font-size:7.75px;line-height:12px">740.00</div>
<div class="t r" style="left:971.4px;width:75.8px;top:414.41px;font-size:7.75px;line-height:12px">0.00</div>
<div class="t r" style="left:1053.5px;width:75.8px;top:414.41px;font-size:7.75px;line-height:12px">0.00</div>
<div class="t r" style="left:1135.6px;width:76.0px;top:414.41px;font-size:7.75px;line-height:12px">0.00</div>
</div>
</body></html>
